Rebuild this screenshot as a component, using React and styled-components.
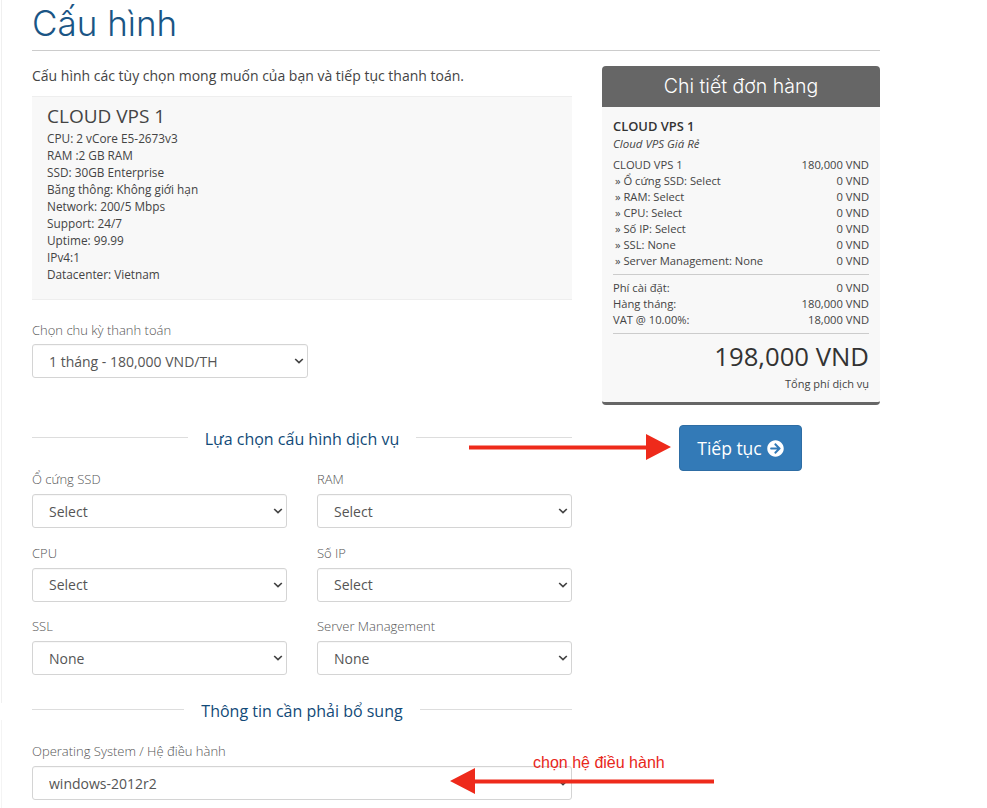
import React from 'react';
import styled, { createGlobalStyle } from 'styled-components';
import { FaArrowCircleRight } from 'react-icons/fa';

const Global = createGlobalStyle`
  html, body { margin: 0; padding: 0; background: #fff; }
  body { font-family: "Open Sans", "Liberation Sans", sans-serif; color: #333; overflow: hidden; }
  * { box-sizing: border-box; }
`;

const chevron = "url(\"data:image/svg+xml,%3Csvg xmlns='http://www.w3.org/2000/svg' width='10' height='6' viewBox='0 0 10 6'%3E%3Cpath d='M1.2 1L5 4.6L8.8 1' fill='none' stroke='%23444' stroke-width='1.7'/%3E%3C/svg%3E\")";

const Page = styled.div`
  position: relative;
  width: 987px;
  height: 808px;
  padding: 0 107px 0 32px;
  overflow: hidden;
`;
const EdgeLine = styled.div`
  position: absolute;
  left: 1px;
  top: 0;
  width: 1px;
  height: 808px;
  background: linear-gradient(#f0f0f0 0 703px, #fff 703px 720px, #f4f4f4 720px);
`;
const Title = styled.h1`
  margin: 0;
  height: 51px;
  padding-top: 1px;
  border-bottom: 1px solid #ccc;
  font-family: Inter, "Open Sans", sans-serif;
  font-weight: 300;
  font-size: 35px;
  line-height: 45px;
  color: #1a5585;
`;
const Columns = styled.div`
  display: flex;
  gap: 30px;
  align-items: flex-start;
`;
const Main = styled.div`
  width: 540px;
`;
const Side = styled.aside`
  width: 278px;
  padding-top: 15px;
  display: flex;
  flex-direction: column;
`;
const Intro = styled.p`
  margin: 0;
  padding-top: 15px;
  height: 45px;
  font-size: 14px;
  line-height: 20px;
  color: #444;
`;
const InfoBox = styled.div`
  height: 204px;
  padding: 8px 15px 0;
  background: #f8f8f8;
  border-top: 1px solid #eee;
  border-bottom: 1px solid #eee;
`;
const InfoName = styled.div`
  font-size: 19px;
  line-height: 22px;
  color: #444;
  margin-bottom: 3px;
`;
const InfoLine = styled.div`
  font-size: 11.8px;
  line-height: 17px;
  color: #444;
`;
const Field = styled.div`
  width: ${p => p.$width || '100%'};
`;
const Label = styled.div`
  font-size: 13px;
  font-weight: 300;
  line-height: 16px;
  height: 23px;
  color: #555;
`;
const Select = styled.select`
  display: block;
  width: 100%;
  height: 34px;
  padding: 0 11px 0 16px;
  appearance: none;
  background: #fff ${chevron} no-repeat right 3px center;
  border: 1px solid #d4d4d4;
  border-radius: 3px;
  font-family: "Open Sans", sans-serif;
  font-size: 14px;
  color: #555;
  box-shadow: inset 0 1px 1px rgba(0,0,0,.03);
`;
const CycleField = styled(Field)`
  margin: 22px 0 0;
  ${Label} { height: 22px; }
`;
const Heading = styled.div`
  display: flex;
  align-items: center;
  gap: 17px;
  height: 24px;
  font-size: 16px;
  line-height: 24px;
  color: #124a78;
  &::before, &::after {
    content: "";
    flex: 1;
    height: 1px;
    background: #ddd;
    transform: translateY(-2px);
  }
`;
const ServiceHeading = styled(Heading)`
  margin: 49px 0 20px;
`;
const ExtraHeading = styled(Heading)`
  margin: 24px 0 20px;
`;
const Grid = styled.div`
  display: grid;
  grid-template-columns: 255px 255px;
  column-gap: 30px;
  row-gap: 16.5px;
`;
const Card = styled.div`
  width: 278px;
  height: 339px;
  border-radius: 4px;
  background: #f8f8f8;
  border-bottom: 3px solid #666;
  display: flex;
  flex-direction: column;
`;
const CardHead = styled.div`
  height: 41px;
  background: #666;
  color: #fff;
  border-radius: 4px 4px 0 0;
  font-family: Inter, "Open Sans", sans-serif;
  font-weight: 300;
  font-size: 19.5px;
  line-height: 40px;
  text-align: center;
`;
const CardBody = styled.div`
  padding: 10px 11px 0;
  font-size: 11.2px;
  line-height: 16px;
  color: #444;
`;
const Product = styled.div`
  font-size: 12.9px;
  font-weight: 600;
  line-height: 18px;
  color: #333;
`;
const Group = styled.div`
  font-style: italic;
  font-size: 11.5px;
  line-height: 18px;
  margin-bottom: 4px;
`;
const Row = styled.div`
  display: flex;
  justify-content: space-between;
  padding-left: ${p => (p.$sub ? '2px' : '0')};
`;
const Rule = styled.hr`
  margin: ${p => p.$m || '5px 0 5px'};
  border: 0;
  border-top: 1px solid #ccc;
`;
const Total = styled.div`
  font-size: 25.7px;
  line-height: 34px;
  text-align: right;
  color: #333;
`;
const TotalNote = styled.div`
  font-size: 11px;
  line-height: 16px;
  margin-top: 2px;
  text-align: right;
`;
const Continue = styled.button`
  margin: 20px 0 0 77px;
  width: 123px;
  height: 46px;
  display: flex;
  align-items: center;
  justify-content: center;
  gap: 5px;
  background: #337ab7;
  border: 1px solid #2e6da4;
  border-radius: 4px;
  color: #fff;
  font-family: "Open Sans", sans-serif;
  font-size: 17.5px;
  svg { width: 17px; height: 17px; }
`;
const Arrow = styled.svg`
  position: absolute;
  left: ${p => p.$x}px;
  top: ${p => p.$y}px;
`;
const Note = styled.div`
  position: absolute;
  left: 533px;
  top: 754px;
  font-family: "Liberation Sans", Arial, sans-serif;
  font-size: 16px;
  line-height: 18px;
  color: #e8271b;
`;

const specs = ['CPU: 2 vCore E5-2673v3','RAM :2 GB RAM','SSD: 30GB Enterprise','Băng thông: Không giới hạn','Network: 200/5 Mbps','Support: 24/7','Uptime: 99.99','IPv4:1','Datacenter: Vietnam'];
const options = [['Ổ cứng SSD','Select'],['RAM','Select'],['CPU','Select'],['Số IP','Select'],['SSL','None'],['Server Management','None']];
const subs = ['Ổ cứng SSD: Select','RAM: Select','CPU: Select','Số IP: Select','SSL: None','Server Management: None'];

const Choice = ({ value }) => (
  <Select defaultValue={value}><option>{value}</option></Select>
);

export default function App() {
  return (
    <Page>
      <Global />
      <EdgeLine />
      <Title>Cấu hình</Title>
      <Columns>
        <Main>
          <Intro>Cấu hình các tùy chọn mong muốn của bạn và tiếp tục thanh toán.</Intro>
          <InfoBox>
            <InfoName>CLOUD VPS 1</InfoName>
            {specs.map(s => <InfoLine key={s}>{s}</InfoLine>)}
          </InfoBox>
          <CycleField $width="276px">
            <Label>Chọn chu kỳ thanh toán</Label>
            <Choice value="1 tháng - 180,000 VND/TH" />
          </CycleField>
          <ServiceHeading>Lựa chọn cấu hình dịch vụ</ServiceHeading>
          <Grid>
            {options.map(([l, v]) => (
              <Field key={l}><Label>{l}</Label><Choice value={v} /></Field>
            ))}
          </Grid>
          <ExtraHeading>Thông tin cần phải bổ sung</ExtraHeading>
          <Field>
            <Label>Operating System / Hệ điều hành</Label>
            <Choice value="windows-2012r2" />
          </Field>
        </Main>
        <Side>
          <Card>
            <CardHead>Chi tiết đơn hàng</CardHead>
            <CardBody>
              <Product>CLOUD VPS 1</Product>
              <Group>Cloud VPS Giá Rẻ</Group>
              <Row><span>CLOUD VPS 1</span><span>180,000 VND</span></Row>
              {subs.map(s => <Row $sub key={s}><span>» {s}</span><span>0 VND</span></Row>)}
              <Rule />
              <Row><span>Phí cài đặt:</span><span>0 VND</span></Row>
              <Row><span>Hàng tháng:</span><span>180,000 VND</span></Row>
              <Row><span>VAT @ 10.00%:</span><span>18,000 VND</span></Row>
              <Rule $m="5px 0 6px" />
              <Total>198,000 VND</Total>
              <TotalNote>Tổng phí dịch vụ</TotalNote>
            </CardBody>
          </Card>
          <Continue>Tiếp tục <FaArrowCircleRight /></Continue>
        </Side>
      </Columns>
      <Arrow $x={469} $y={434} width="202" height="26" viewBox="0 0 202 26">
        <path d="M0 11.5H177V0L202 13L177 26V15.5H0Z" fill="#ee2a1b" />
      </Arrow>
      <Arrow $x={450} $y={768} width="264" height="26" viewBox="0 0 264 26">
        <path d="M264 11.5H25V0L0 13L25 26V15.5H264Z" fill="#ee2a1b" />
      </Arrow>
      <Note>chọn hệ điều hành</Note>
    </Page>
  );
}
